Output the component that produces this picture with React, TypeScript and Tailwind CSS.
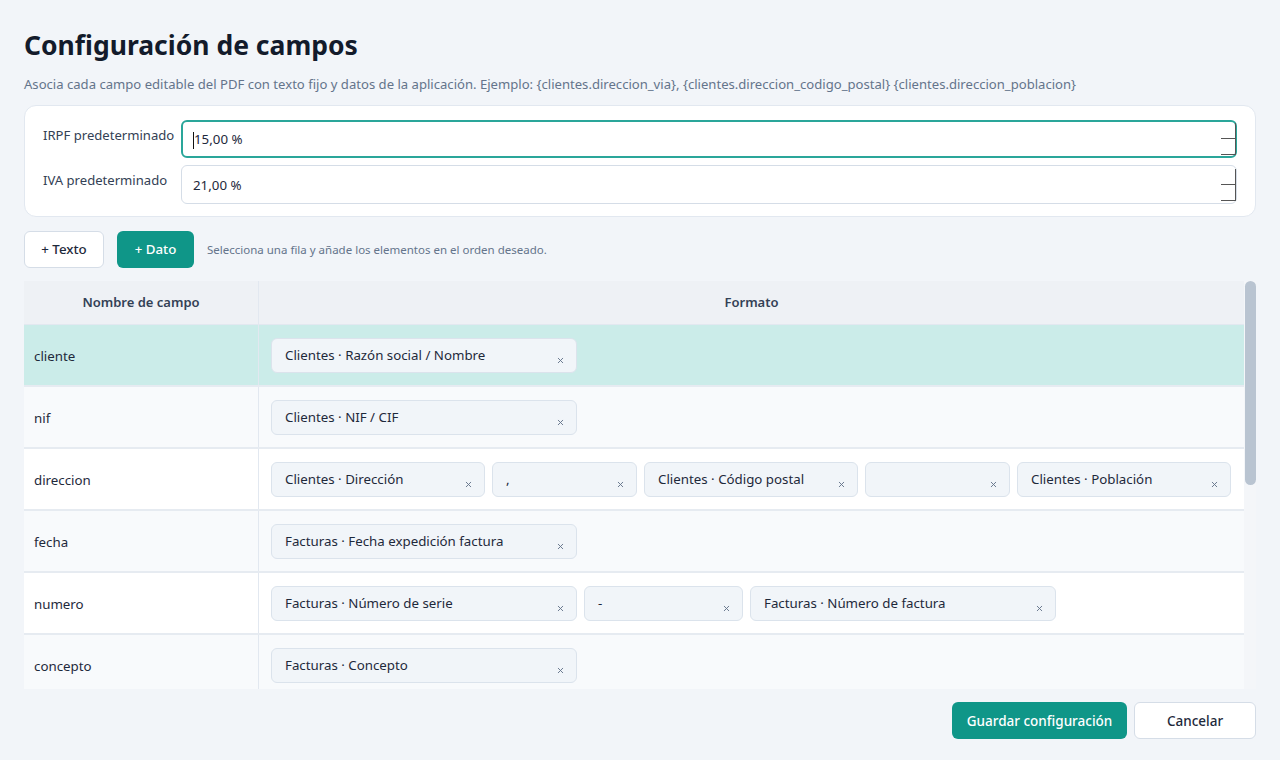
import { X } from 'lucide-react';

type Chip = { label: string; w: number };

const rows: { name: string; chips: Chip[]; bg: string }[] = [
  { name: 'cliente', bg: 'bg-[#cbece9]', chips: [{ label: 'Clientes · Razón social / Nombre', w: 306 }] },
  { name: 'nif', bg: 'bg-[#f8fafc]', chips: [{ label: 'Clientes · NIF / CIF', w: 306 }] },
  {
    name: 'direccion',
    bg: 'bg-white',
    chips: [
      { label: 'Clientes · Dirección', w: 214 },
      { label: ',', w: 145 },
      { label: 'Clientes · Código postal', w: 214 },
      { label: '', w: 145 },
      { label: 'Clientes · Población', w: 214 },
    ],
  },
  { name: 'fecha', bg: 'bg-[#f8fafc]', chips: [{ label: 'Facturas · Fecha expedición factura', w: 306 }] },
  {
    name: 'numero',
    bg: 'bg-white',
    chips: [
      { label: 'Facturas · Número de serie', w: 306 },
      { label: '-', w: 159 },
      { label: 'Facturas · Número de factura', w: 306 },
    ],
  },
  { name: 'concepto', bg: 'bg-[#f8fafc]', chips: [{ label: 'Facturas · Concepto', w: 306 }] },
];

const Spinner = () => (
  <div className="absolute right-[1px] top-[2px] bottom-[2px] w-[15px] flex flex-col justify-center">
    <div className="h-[16px] border-b border-r border-[#555]" />
    <div className="h-[16px] border-b border-r border-[#555]" />
  </div>
);

const App = () => {
  return (
    <div className="h-[760px] w-[1280px] overflow-hidden bg-[#f2f5f9] px-6 pt-[27px] font-['Noto_Sans',sans-serif] text-[#1e293b]">
      {/* Header */}
      <h1 className="text-[26.5px] font-bold leading-[36px] text-[#131b2b]">Configuración de campos</h1>
      <p className="mt-[12px] text-[13.1px] leading-[18px] text-[#64748b]">
        Asocia cada campo editable del PDF con texto fijo y datos de la aplicación. Ejemplo: {'{clientes.direccion_via}'},{' '}
        {'{clientes.direccion_codigo_postal}'} {'{clientes.direccion_poblacion}'}
      </p>

      {/* Defaults card */}
      <div className="mt-[12px] rounded-[12px] border border-[#e2e8f0] bg-white pb-[12px] pl-[18px] pr-[18px] pt-[14px]">
        <div className="flex items-start">
          <label className="w-[138px] whitespace-nowrap pt-[5px] text-[13.1px] leading-[20px] text-[#334155]">IRPF predeterminado</label>
          <div className="relative flex-1">
            <div className="flex h-[38px] items-center rounded-[6px] border-2 border-[#2aa69a] px-[10px] pt-[2px] text-[13.3px] text-[#1e293b]">
              <span className="inline-block h-[17px] w-[1px] bg-[#111]" />
              15,00 %
            </div>
            <Spinner />
          </div>
        </div>
        <div className="mt-[7px] flex items-start">
          <label className="w-[138px] whitespace-nowrap pt-[5px] text-[13.1px] leading-[20px] text-[#334155]">IVA predeterminado</label>
          <div className="relative flex-1">
            <div className="flex h-[39px] items-center rounded-[6px] border border-[#d5dde7] px-[11px] pt-[2px] text-[13.3px] text-[#1e293b]">
              21,00 %
            </div>
            <Spinner />
          </div>
        </div>
      </div>

      {/* Actions */}
      <div className="mt-[14px] flex items-center">
        <button className="h-[37px] w-[80px] rounded-[6px] border border-[#d5dde7] bg-white pt-[1px] text-[13.3px] font-medium text-[#1e293b]">
          + Texto
        </button>
        <button className="ml-[13px] h-[37px] w-[77px] rounded-[6px] bg-[#0f9688] pt-[1px] text-[13.3px] font-medium text-white">
          + Dato
        </button>
        <span className="ml-[13px] text-[11.5px] text-[#64748b]">Selecciona una fila y añade los elementos en el orden deseado.</span>
      </div>

      {/* Table */}
      <div className="mt-[13px] flex h-[408px]">
        <div className="flex-1 overflow-hidden">
          <div className="flex h-[44px] border-b border-[#e2e8f0] bg-[#eef1f5] text-[13px] font-semibold text-[#334155]">
            <div className="flex w-[235px] items-center justify-center border-r border-[#e2e8f0]">Nombre de campo</div>
            <div className="flex flex-1 items-center justify-center">Formato</div>
          </div>
          {rows.map((row) => (
            <div key={row.name} className={`flex h-[62px] border-b-2 border-[#e6ebf1] ${row.bg}`}>
              <div className="flex w-[235px] items-center border-r border-[#e2e8f0] pl-[10px] pt-[3px] text-[13.3px] text-[#1e293b]">
                {row.name}
              </div>
              <div className="flex flex-1 items-center gap-[7px] pl-[12px]">
                {row.chips.map((chip, i) => (
                  <div
                    key={i}
                    style={{ width: chip.w }}
                    className="relative flex h-[35px] shrink-0 items-center rounded-[6px] border border-[#dbe3ec] bg-[#f1f5f9] pl-[13px] pt-[2px] text-[13.3px] text-[#1e293b]"
                  >
                    {chip.label}
                    <X className="absolute right-[11px] top-[17px] h-[9px] w-[9px] text-[#64748b]" strokeWidth={2.5} />
                  </div>
                ))}
              </div>
            </div>
          ))}
        </div>
        <div className="w-[12px] bg-[#f4f6f9]">
          <div className="ml-[1px] h-[204px] rounded-[6px] bg-[#b9c4d1]" />
        </div>
      </div>

      {/* Footer */}
      <div className="mt-[13px] flex justify-end gap-[7px]">
        <button className="h-[37px] w-[175px] rounded-[6px] bg-[#0f9688] pt-[1px] text-[13.5px] font-medium text-white">
          Guardar configuración
        </button>
        <button className="h-[37px] w-[122px] rounded-[6px] border border-[#d5dde7] bg-white pt-[1px] text-[13.5px] font-medium text-[#1e293b]">
          Cancelar
        </button>
      </div>
    </div>
  );
};

export default App;
